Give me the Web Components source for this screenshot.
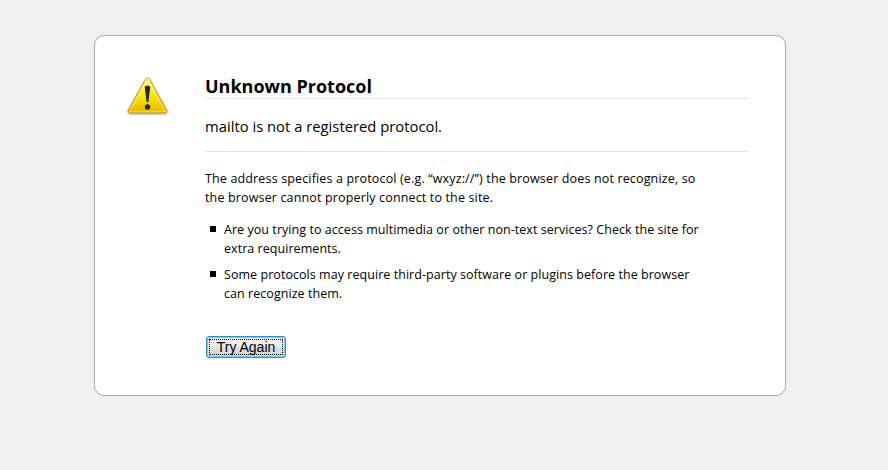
<!DOCTYPE html>
<html>
<head>
<meta charset="utf-8">
<title>Problem loading page</title>
<style>
    html, body { margin: 0; height: 100%; background: #f0f0f0; }
    body { font-family: "Open Sans", "DejaVu Sans", sans-serif; color: #000; }
</style>
</head>
<body>
<template id="error-page-template">
    <style>
        :host { display: block; padding-top: 35px; }
        .card {
            box-sizing: border-box;
            width: 692px;
            height: 361px;
            margin-left: 94px;
            padding: 38px 36px 0 32px;
            background: #fff;
            border: 1px solid #a8a8a8;
            border-radius: 10px;
            display: flex;
        }
        .icon { width: 42px; flex: none; margin-right: 36px; padding-top: 3px; }
        .icon svg { display: block; filter: drop-shadow(0 1px 1px rgba(0,0,0,.35)); }
        .main { flex: 1; min-width: 0; }
    </style>
    <div class="card">
        <div class="icon">
            <svg width="44" height="40" viewBox="0 0 44 40">
                <defs>
                    <linearGradient id="warn" x1="0" y1="0" x2="0" y2="1">
                        <stop offset="0" stop-color="#fff7a8"/>
                        <stop offset=".5" stop-color="#fbe414"/>
                        <stop offset="1" stop-color="#e6b400"/>
                    </linearGradient>
                </defs>
                <path d="M20.500 1c1 0 1.700.6 2.200 1.500L39.600 33c.8 1.600 0 3-1.700 3H3.100c-1.700 0-2.500-1.400-1.700-3L18.300 2.500C18.800 1.600 19.500 1 20.500 1z" fill="url(#warn)" stroke="#c29c22"/>
                <path d="M20.500 2.500 38.600 34.800H2.400z" fill="none" stroke="#fff6a6" stroke-opacity=".6" stroke-linejoin="round"/>
                <path d="M17.800 10.500c0-1.300 1.300-2 2.700-2s2.700.7 2.700 2l-1.800 14.500h-1.800z" fill="#2a2a2a"/>
                <circle cx="20.500" cy="30" r="2.700" fill="#2a2a2a"/>
            </svg>
        </div>
        <div class="main"><slot></slot></div>
    </div>
</template>

<template id="error-title-template">
    <style>
        :host {
            display: block;
            font-size: 18px;
            font-weight: 700;
            line-height: 24px;
            border-bottom: 1px solid #e4e4e4;
        }
    </style>
    <slot></slot>
</template>

<template id="error-summary-template">
    <style>
        :host {
            display: block;
            font-size: 14.800px;
            line-height: 20px;
            padding: 17px 0 15px;
            margin-bottom: 17px;
            border-bottom: 1px solid #e4e4e4;
        }
    </style>
    <slot></slot>
</template>

<template id="error-text-template">
    <style>
        :host { display: block; font-size: 12.500px; letter-spacing: .15px; line-height: 19px; max-width: 500px; margin-bottom: 13px; }
    </style>
    <slot></slot>
</template>

<template id="error-item-template">
    <style>
        :host {
            display: flex;
            font-size: 12.500px;
            letter-spacing: .05px;
            line-height: 19px;
            max-width: 500px;
            margin-top: 7px;
        }
        .bullet { width: 19px; flex: none; padding-top: 6px; }
        .bullet i { display: block; width: 6px; height: 6px; margin-left: 5px; background: #000; }
    </style>
    <div class="bullet"><i></i></div>
    <div><slot></slot></div>
</template>

<template id="try-button-template">
    <style>
        :host { display: inline-block; margin: 32px 0 0 1px; }
        button {
            box-sizing: border-box;
            width: 80px;
            height: 22px;
            padding: 0;
            font: 14px "Liberation Sans", Arial, sans-serif;
            color: #000;
            background: linear-gradient(#f2f2f2 0, #ebebeb 48%, #dedede 52%, #d2d2d2 100%);
            border: 1px solid #2f8fbf;
            border-radius: 3px;
            box-shadow: inset 0 0 0 1px #74cdf0;
        }
        span { display: block; margin: 2px; line-height: 16px; outline: 1px dotted #000; outline-offset: -1px; }
    </style>
    <button type="button"><span><slot></slot></span></button>
</template>

<script>
    // every element is the same: clone its template into an open shadow root
    class TemplateElement extends HTMLElement {
        constructor(templateId) {
            super();
            this.attachShadow({mode: 'open'});
            const template = document.querySelector(templateId);
            this.shadowRoot.appendChild(template.content.cloneNode(true));
        }
    }

    customElements.define('error-page', class extends TemplateElement {
        constructor() { super('#error-page-template'); }
    });
    customElements.define('error-title', class extends TemplateElement {
        constructor() { super('#error-title-template'); }
    });
    customElements.define('error-summary', class extends TemplateElement {
        constructor() { super('#error-summary-template'); }
    });
    customElements.define('error-text', class extends TemplateElement {
        constructor() { super('#error-text-template'); }
    });
    customElements.define('error-item', class extends TemplateElement {
        constructor() { super('#error-item-template'); }
    });
    customElements.define('try-button', class extends TemplateElement {
        constructor() { super('#try-button-template'); }
    });
</script>

<error-page>
    <error-title>Unknown Protocol</error-title>
    <error-summary>mailto is not a registered protocol.</error-summary>
    <error-text>The address specifies a protocol (e.g. “wxyz://”) the browser does not recognize, so the browser cannot properly connect to the site.</error-text>
    <error-item>Are you trying to access multimedia or other non-text services? Check the site for extra requirements.</error-item>
    <error-item>Some protocols may require third-party software or plugins before the browser can recognize them.</error-item>
    <try-button>Try Again</try-button>
</error-page>
</body>
</html>
